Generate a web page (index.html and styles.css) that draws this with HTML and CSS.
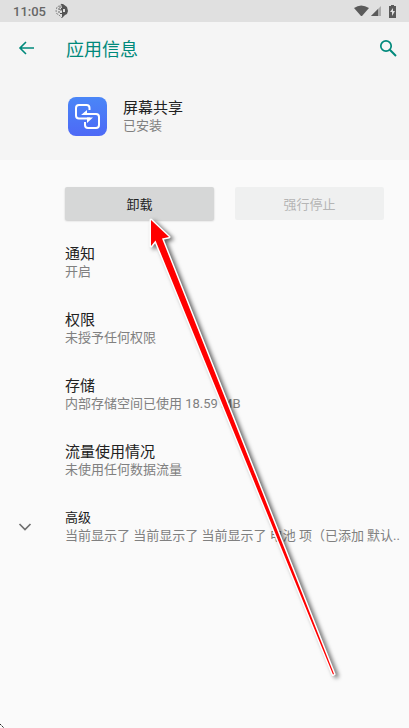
FILE: index.html
```html
<!DOCTYPE html>
<html lang="zh-CN">
<head>
  <meta charset="UTF-8">
  <meta name="viewport" content="width=device-width, initial-scale=1">
  <title>应用信息</title>
  <link rel="stylesheet" href="styles.css">
</head>
<body>

  <div class="status-bar">
    <span class="time">11:05</span>
    <svg class="debug-icon" width="14" height="16" viewBox="0 0 14 16">
      <path d="M7 1L4 3L2 4L1 8L2 11L4 12L7 15" fill="none" stroke="#888" stroke-dasharray="2 1"/>
      <path d="M6 1L8 1L12 4L13 8L12 11L10 12L7 15V11H5V10H7V7H6V5H7Z" fill="#555"/>
      <path d="M3 6h2v1h2M3 9h2M4 4h2" fill="none" stroke="#666"/>
      <path d="M8 6h2v3h-2z" fill="#ddd"/>
    </svg>
    <div class="status-icons">
      <svg width="15" height="12" viewBox="0 0 15 12"><path d="M0 3Q7 -2 15 3L8 11H7Z" fill="#5a5a5a"/></svg>
      <svg width="11" height="12" viewBox="0 0 11 12"><path d="M0 11L10 1V11Z" fill="#aaa"/><path d="M0 11L7 4V11Z" fill="#5a5a5a"/></svg>
      <svg class="battery" width="7" height="13" viewBox="0 0 7 13"><path d="M2 0h3v1h2v12H0V1h2Z" fill="#5a5a5a"/><path d="M4 3L1 7h2v4L6 6H4Z" fill="#e0e0e0"/></svg>
    </div>
  </div>

  <header>
    <button class="icon-button" aria-label="返回">
      <svg width="16" height="14" viewBox="0 0 16 14"><path d="M16 7H2M8 1L2 7L8 13" fill="none" stroke="#00897b" stroke-width="1.6"/></svg>
    </button>
    <h1>应用信息</h1>
    <button class="icon-button" aria-label="搜索">
      <svg width="18" height="18" viewBox="0 0 18 18"><circle cx="7" cy="7" r="5.2" fill="none" stroke="#00897b" stroke-width="1.7"/><path d="M10.8 10.8L17 17" stroke="#00897b" stroke-width="2"/></svg>
    </button>
  </header>

  <section class="app">
    <svg class="app-icon" width="39" height="39" viewBox="0 0 39 39">
      <defs>
        <linearGradient id="appBlue" x1="0" y1="0" x2="0" y2="1">
          <stop offset="0" stop-color="#4a86f7"/>
          <stop offset="1" stop-color="#4d69f6"/>
        </linearGradient>
      </defs>
      <rect width="39" height="39" rx="8" fill="url(#appBlue)"/>
      <g fill="none" stroke="#fff" stroke-width="2">
        <path d="M21.5 13V11Q21.5 8 18.5 8H11Q8 8 8 11V18.5Q8 21.5 11 21.5H22"/>
        <path d="M17 25V28Q17 31 20 31H28Q31 31 31 28V20Q31 17 28 17H17"/>
      </g>
      <path d="M13 18L19 13V18ZM25 20.5L19 26V20.5Z" fill="#fff"/>
    </svg>
    <div>
      <h2>屏幕共享</h2>
      <p>已安装</p>
    </div>
  </section>

  <main>
    <div class="actions">
      <button class="uninstall">卸载</button>
      <button class="force-stop" disabled>强行停止</button>
    </div>

    <ul class="settings">
      <li><h2>通知</h2><p>开启</p></li>
      <li><h2>权限</h2><p>未授予任何权限</p></li>
      <li><h2>存储</h2><p>内部存储空间已使用 18.59 MB</p></li>
      <li><h2>流量使用情况</h2><p>未使用任何数据流量</p></li>
      <li class="advanced">
        <svg class="chevron" width="14" height="9" viewBox="0 0 14 9"><path d="M1.5 1L7 6.5L12.5 1" fill="none" stroke="#707070" stroke-width="1.7"/></svg>
        <div>
          <h2>高级</h2>
          <p>当前显示了 当前显示了 当前显示了 电池 项（已添加 默认..</p>
        </div>
      </li>
    </ul>
  </main>

  <!-- arrow pointing at the uninstall button -->
  <svg class="pointer" width="210" height="480" viewBox="0 0 210 480">
    <path class="pointer-shape" d="M11 10L29 27L22 28.5L194 464L193 464.5L15.5 30.5L11 36Z"/>
  </svg>

  <svg class="corner" width="5" height="5" viewBox="0 0 5 5"><path d="M0 1L4 5" stroke="#222" stroke-dasharray="2 1"/></svg>

</body>
</html>
```
FILE: styles.css
```css
body {
  margin: 0;
  min-height: 100vh;
  position: relative;
  overflow-x: hidden;
  font-family: Roboto, "Noto Sans CJK SC", sans-serif;
  background: #fafafa;
  color: #212121;
}

h1, h2, p, ul {
  margin: 0;
  padding: 0;
  font-weight: 400;
}

svg {
  display: block;
  flex: none;
}

button {
  border: 0;
  font-family: inherit;
}

.status-bar {
  height: 22px;
  padding: 0 13px;
  display: flex;
  align-items: center;
  gap: 9px;
  background: #e0e0e0;
}

.time {
  font-size: 13px;
  font-weight: 500;
  color: #666;
}

.status-icons {
  margin-left: auto;
  display: flex;
  align-items: center;
  gap: 2px;
}

.battery {
  margin-left: 5px;
}

header {
  height: 52px;
  padding: 0 7px 0 12px;
  display: flex;
  align-items: center;
  background: #f5f5f5;
}

h1 {
  flex: 1;
  margin-left: 26px;
  font-size: 18px;
  color: #00897b;
}

.icon-button {
  width: 28px;
  height: 28px;
  padding: 0;
  display: flex;
  align-items: center;
  justify-content: center;
  background: none;
}

.app {
  padding: 23px 25px 24px 68px;
  display: flex;
  align-items: center;
  gap: 16px;
  background: #f5f5f5;
}

h2 {
  font-size: 15px;
  line-height: 18px;
}

p {
  font-size: 13px;
  line-height: 18px;
  color: #808080;
  white-space: nowrap;
}

.actions {
  padding: 27px 25px 0 65px;
  display: flex;
  gap: 21px;
}

.actions button {
  flex: 1;
  height: 33px;
  padding: 0;
  border-radius: 2px;
  font-size: 13px;
}

.uninstall {
  background: #d6d7d7;
  color: #212121;
  box-shadow: 0 1px 2px rgba(0, 0, 0, 0.2);
}

.force-stop {
  background: #eff0f0;
  color: #b5b5b5;
}

.settings {
  padding: 25px 0 25px 65px;
  display: grid;
  gap: 30px;
  list-style: none;
}

.advanced {
  margin-left: -47px;
  display: flex;
  align-items: center;
  gap: 33px;
}

.advanced h2 {
  font-size: 13px;
}

.pointer {
  position: absolute;
  left: 140px;
  top: 210px;
  filter: drop-shadow(3px 2px 2px rgba(0, 0, 0, 0.6));
  pointer-events: none;
}

.pointer-shape {
  fill: #f00;
  stroke: #fff;
  stroke-width: 3px;
  stroke-linejoin: round;
  paint-order: stroke;
}

.corner {
  position: absolute;
  left: 0;
  bottom: 0;
}
```
